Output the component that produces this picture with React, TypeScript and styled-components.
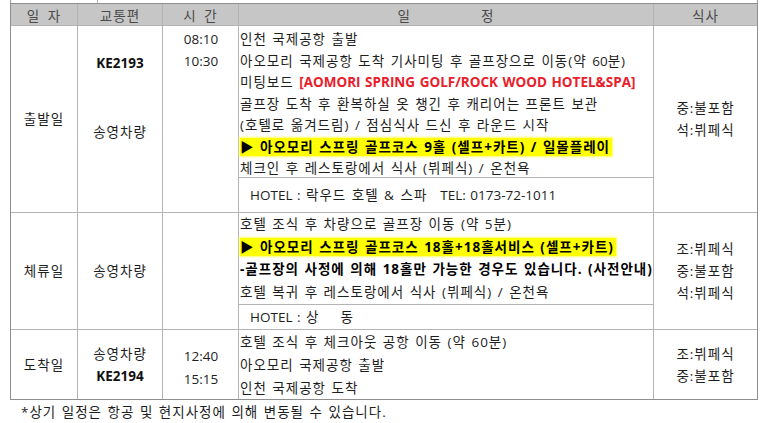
import styled, { createGlobalStyle } from 'styled-components';

const GlobalStyle = createGlobalStyle`
  html, body {
    margin: 0;
    padding: 0;
    background: #fff;
  }
  body {
    font-family: 'Open Sans', 'Noto Sans CJK KR', sans-serif;
    font-size: 13.5px;
    color: #1e1e1e;
  }
`;

const Page = styled.div`
  width: 766px;
  height: 423px;
  overflow: hidden;
  padding-left: 10px;
  box-sizing: border-box;
  letter-spacing: 1px;
`;

const Stub = styled.div`
  display: grid;
  grid-template-columns: 86px 1fr;
  width: 748px;
  height: 3px;
  box-sizing: border-box;
  border-left: 1px solid #999;
  border-right: 1px solid #999;

  & > div + div {
    border-left: 1px solid #b4b4b4;
  }
`;

const Schedule = styled.div`
  display: grid;
  grid-template-columns: 66px 84px 75px 414px 103px;
  grid-template-rows: 21px 151px 34px 91px 24px 69px;
  gap: 1px;
  width: max-content;
  background: #b4b4b4;
  border: 1px solid #8e8e8e;
`;

const Head = styled.div<{ $gap?: number }>`
  display: flex;
  align-items: center;
  justify-content: center;
  gap: ${(p) => p.$gap ?? 0}px;
  background: #c6c6c6;
  color: #4a4a4a;
  word-spacing: 3px;
`;

const Cell = styled.div<{ $rows: string; $col: number; $top?: number; $left?: boolean }>`
  grid-row: ${(p) => p.$rows};
  grid-column: ${(p) => p.$col};
  display: flex;
  flex-direction: column;
  align-items: ${(p) => (p.$left ? 'flex-start' : 'center')};
  justify-content: ${(p) => (p.$top === undefined ? 'center' : 'flex-start')};
  padding-top: ${(p) => p.$top ?? 0}px;
  background: #fff;
  line-height: 22px;
  white-space: nowrap;
`;

const Lines = styled.div<{ $lh: number; $latin?: boolean }>`
  display: flex;
  flex-direction: column;
  line-height: ${(p) => p.$lh}px;
  word-spacing: 1px;
  letter-spacing: ${(p) => (p.$latin ? '0' : '1px')};
`;

const Line = styled.div`
  min-height: 1em;
  padding-left: 1px;
`;

const Hotel = styled.div`
  padding-left: 11px;
  word-spacing: 1px;
`;

const Gap = styled.span<{ $w: number }>`
  display: inline-block;
  width: ${(p) => p.$w}px;
`;

const En = styled.span`
  letter-spacing: 0;
`;

const Code = styled.span`
  font-weight: 700;
  color: #111;
  letter-spacing: 0;
`;

const Red = styled.span`
  font-weight: 700;
  color: #e8202a;
  letter-spacing: 0;
`;

const Bold = styled.span`
  font-weight: 700;
  color: #000;
`;

const Mark = styled.span`
  font-weight: 700;
  color: #000;
  background: #ffff00;
  box-shadow: 0 0 2px 1px #ffff66;
  padding-right: 2px;
`;

const Spacer = styled.div<{ $h: number }>`
  height: ${(p) => p.$h}px;
`;

const Note = styled.div`
  padding: 3px 0 0 11px;
  line-height: 19px;
  word-spacing: 1px;
`;

export default function App() {
  return (
    <Page>
      <GlobalStyle />
      <Stub>
        <div />
        <div />
      </Stub>
      <Schedule>
        <Head>일 자</Head>
        <Head>교통편</Head>
        <Head>시 간</Head>
        <Head $gap={70}>
          <span>일</span>
          <span>정</span>
        </Head>
        <Head>식사</Head>

        {/* 출발일 */}
        <Cell $rows="2 / 4" $col={1}>출발일</Cell>
        <Cell $rows="2 / 4" $col={2} $top={26}>
          <Code>KE2193</Code>
          <Spacer $h={47} />
          <span>송영차량</span>
        </Cell>
        <Cell $rows="2 / 4" $col={3} $top={3}>
          <Lines $lh={21.5} $latin>
            <Line>08:10</Line>
            <Line>10:30</Line>
          </Lines>
        </Cell>
        <Cell $rows="2" $col={4} $top={3} $left>
          <Lines $lh={21.5}>
            <Line>인천 국제공항 출발</Line>
            <Line>
              아오모리 국제공항 도착 기사미팅 후 골프장으로 이동(약 <En>60</En>분)
            </Line>
            <Line>
              미팅보드 <Red>[AOMORI SPRING GOLF/ROCK WOOD HOTEL&amp;SPA]</Red>
            </Line>
            <Line>골프장 도착 후 환복하실 옷 챙긴 후 캐리어는 프론트 보관</Line>
            <Line>(호텔로 옮겨드림) / 점심식사 드신 후 라운드 시작</Line>
            <Line>
              <Mark>▶ 아오모리 스프링 골프코스 9홀 (셀프+카트) / 일몰플레이</Mark>
            </Line>
            <Line>체크인 후 레스토랑에서 식사 (뷔페식) / 온천욕</Line>
          </Lines>
        </Cell>
        <Cell $rows="3" $col={4} $left>
          <Hotel>
            <En>HOTEL :</En> 락우드 호텔 &amp; 스파<Gap $w={13} />
            <En>TEL: 0173-72-1011</En>
          </Hotel>
        </Cell>
        <Cell $rows="2 / 4" $col={5}>
          <span>중:불포함</span>
          <span>석:뷔페식</span>
        </Cell>

        {/* 체류일 */}
        <Cell $rows="4 / 6" $col={1}>체류일</Cell>
        <Cell $rows="4 / 6" $col={2}>송영차량</Cell>
        <Cell $rows="4 / 6" $col={3} />
        <Cell $rows="4" $col={4} $top={0} $left>
          <Lines $lh={22.5}>
            <Line>호텔 조식 후 차량으로 골프장 이동 (약 5분)</Line>
            <Line>
              <Mark>▶ 아오모리 스프링 골프코스 18홀+18홀서비스 (셀프+카트)</Mark>
            </Line>
            <Line>
              <Bold>-골프장의 사정에 의해 18홀만 가능한 경우도 있습니다. (사전안내)</Bold>
            </Line>
            <Line>호텔 복귀 후 레스토랑에서 식사 (뷔페식) / 온천욕</Line>
          </Lines>
        </Cell>
        <Cell $rows="5" $col={4} $left>
          <Hotel>
            <En>HOTEL :</En> 상<Gap $w={21} />동
          </Hotel>
        </Cell>
        <Cell $rows="4 / 6" $col={5}>
          <span>조:뷔페식</span>
          <span>중:불포함</span>
          <span>석:뷔페식</span>
        </Cell>

        {/* 도착일 */}
        <Cell $rows="6" $col={1}>도착일</Cell>
        <Cell $rows="6" $col={2}>
          <span>송영차량</span>
          <Code>KE2194</Code>
        </Cell>
        <Cell $rows="6" $col={3} $top={1}>
          <Lines $lh={23} $latin>
            <Line />
            <Line>12:40</Line>
            <Line>15:15</Line>
          </Lines>
        </Cell>
        <Cell $rows="6" $col={4} $top={1} $left>
          <Lines $lh={23}>
            <Line>호텔 조식 후 체크아웃 공항 이동 (약 60분)</Line>
            <Line>아오모리 국제공항 출발</Line>
            <Line>인천 국제공항 도착</Line>
          </Lines>
        </Cell>
        <Cell $rows="6" $col={5}>
          <span>조:뷔페식</span>
          <span>중:불포함</span>
        </Cell>
      </Schedule>
      <Note>*상기 일정은 항공 및 현지사정에 의해 변동될 수 있습니다.</Note>
    </Page>
  );
}
